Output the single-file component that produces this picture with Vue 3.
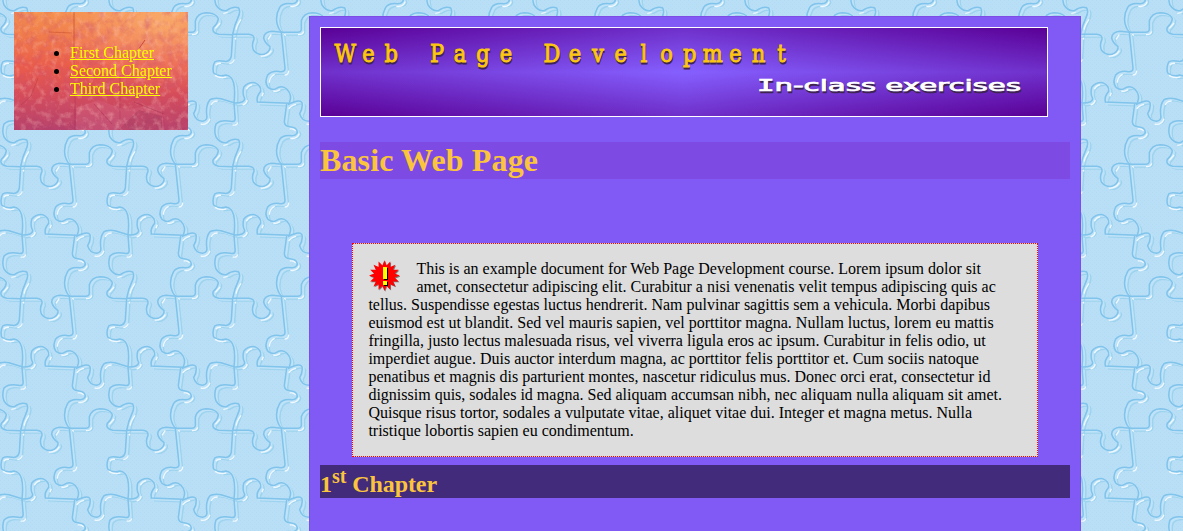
<script setup>
const chapters = ['First Chapter', 'Second Chapter', 'Third Chapter']
const title = 'Web Page Development'
const titleX = [...title].map((_, i) => ((24.4 + i * 22.95) / 0.84).toFixed(2)).join(' ')

const intro = [
  'This is an example document for Web Page Development course. Lorem ipsum dolor sit',
  'amet, consectetur adipiscing elit. Curabitur a nisi venenatis velit tempus adipiscing quis ac',
  'tellus. Suspendisse egestas luctus hendrerit. Nam pulvinar sagittis sem a vehicula. Morbi dapibus',
  'euismod est ut blandit. Sed vel mauris sapien, vel porttitor magna. Nullam luctus, lorem eu mattis',
  'fringilla, justo lectus malesuada risus, vel viverra ligula eros ac ipsum. Curabitur in felis odio, ut',
  'imperdiet augue. Duis auctor interdum magna, ac porttitor felis porttitor et. Cum sociis natoque',
  'penatibus et magnis dis parturient montes, nascetur ridiculus mus. Donec orci erat, consectetur id',
  'dignissim quis, sodales id magna. Sed aliquam accumsan nibh, nec aliquam nulla aliquam sit amet.',
  'Quisque risus tortor, sodales a vulputate vitae, aliquet vitae dui. Integer et magna metus. Nulla',
  'tristique lobortis sapien eu condimentum.'
].join(' ')

// Starburst outline of the warning icon
const spikes = 16
const burst = Array.from({ length: spikes * 2 }, (_, i) => {
  const r = i % 2 ? 10.4 : 15.4
  const a = (Math.PI * i) / spikes - Math.PI / 2
  return `${(16.4 + r * Math.cos(a)).toFixed(1)},${(15.6 + r * Math.sin(a)).toFixed(1)}`
}).join(' ')

// Jigsaw outlines, drawn on a 318 x 396 tile (three units per pixel)
const jigsaw = [
  'M62 97H110Q128 98 126 112Q118 128 124 144Q136 160 156 157Q176 148 174 134Q158 122 155 108Q156 90 180 88L210 91',
  'M210 91H258Q270 90 268 76V56Q275 33 300 32Q330 33 337 50Q335 65 322 76Q316 92 338 97L380 98',
  'M62 97L58 162Q54 180 38 178Q15 173 8 180Q0 195 5 213Q20 226 42 219Q60 222 65 243Q70 265 66 303',
  'M66 303L69 345Q72 362 55 358Q25 353 12 366Q5 385 12 405Q25 425 43 422Q64 407 80 414Q87 425 77 445Q67 465 62 493',
  'M208 91L219 198Q220 210 205 209Q180 205 167 219Q156 240 168 256Q182 266 192 260Q210 247 225 262Q242 280 232 303',
  'M224 306L217 358Q217 374 234 374Q255 376 256 390Q253 402 238 401Q213 398 203 412Q190 435 195 460Q200 480 210 487',
  'M66 303Q98 304 98 289Q90 275 95 256Q108 240 128 242Q148 250 146 268Q132 285 136 300L232 304',
  'M228 308Q262 290 270 302Q273 318 263 335Q268 356 290 358Q306 355 302 338Q299 308 312 293Q327 286 345 290L384 302'
]
const glints = [
  'M146 163Q168 163 178 146', 'M168 112L178 97', 'M258 98Q272 99 275 88',
  'M328 79L342 63', 'M52 185Q64 183 67 172', 'M11 189Q17 183 27 184',
  'M9 220Q26 231 42 225', 'M62 369Q76 371 77 361', 'M34 430L47 428',
  'M73 83Q72 73 87 52', 'M218 219Q229 219 230 206', 'M172 242Q173 224 188 217',
  'M184 267Q194 270 204 263', 'M235 409Q257 412 261 395', 'M233 381Q244 379 251 386',
  'M92 309Q106 304 105 294', 'M103 262Q108 251 120 248', 'M150 283L154 272',
  'M230 321Q236 311 252 307', 'M284 366Q305 370 312 350', 'M316 309Q320 297 335 297',
  'M69 108L72 112', 'M217 96L221 101'
]
const wraps = [
  [0, 0], [-318, 0], [318, 0], [0, -396], [-318, -396], [0, 396]
]

const scratches = [
  { d: 'M60 0V58', c: '#a8281c', w: 0.8, o: 0.55 },
  { d: 'M61 70V118', c: '#8e1745', w: 0.6, o: 0.4 },
  { d: 'M35 20L58 21', c: '#a92412', w: 0.6, o: 0.5 },
  { d: 'M124 38L131 28', c: '#b01e12', w: 1, o: 0.6 },
  { d: 'M106 66V108', c: '#99284d', w: 0.6, o: 0.5 },
  { d: 'M80 92L98 112', c: '#982045', w: 0.6, o: 0.6 },
  { d: 'M24 66L17 84L7 93', c: '#a22a3c', w: 0.6, o: 0.5 },
  { d: 'M120 90L150 102', c: '#9e2848', w: 0.7, o: 0.6 }
]
</script>

<template>
  <svg class="backdrop" aria-hidden="true">
    <defs>
      <g id="lines"><path v-for="d in jigsaw" :key="d" :d="d" /></g>
      <g id="glints"><path v-for="d in glints" :key="d" :d="d" /></g>
      <pattern id="dither" width="4" height="4" patternUnits="userSpaceOnUse">
        <rect width="4" height="4" fill="#b9dff7" />
        <rect width="1" height="1" fill="#b2daf3" />
        <rect x="2" y="2" width="1" height="1" fill="#b3dbf4" />
      </pattern>
      <pattern id="puzzle" width="106" height="132" y="2" patternUnits="userSpaceOnUse">
        <g transform="scale(.33333)" fill="none">
          <g v-for="([x, y], i) in wraps" :key="'s' + i" :transform="`translate(${x} ${y})`">
            <use href="#lines" x="10" y="8" stroke="#9dd3ee" stroke-width="4.5" />
            <use href="#lines" x="5" y="4" stroke="#bfe3f8" stroke-width="5" />
          </g>
          <g v-for="([x, y], i) in wraps" :key="'d' + i" :transform="`translate(${x} ${y})`">
            <use href="#lines" stroke="#80c3eb" stroke-width="4.5" />
            <use href="#glints" stroke="#f0f9ff" stroke-width="4" />
          </g>
        </g>
      </pattern>
    </defs>
    <rect width="100%" height="100%" fill="url(#dither)" />
    <rect width="100%" height="100%" fill="url(#puzzle)" />
  </svg>

  <div class="page">
    <nav class="menu">
      <svg class="texture" viewBox="0 0 174 118" aria-hidden="true">
        <defs>
          <linearGradient id="sunset" x1="0" y1="0" x2="0" y2="1">
            <stop offset="0" stop-color="#f4914e" />
            <stop offset=".22" stop-color="#f07a4b" />
            <stop offset=".45" stop-color="#ea5d4b" />
            <stop offset=".7" stop-color="#d54c5a" />
            <stop offset="1" stop-color="#b4416c" />
          </linearGradient>
          <radialGradient id="glow" cx=".85" cy=".1" r=".6">
            <stop offset="0" stop-color="#ffc884" stop-opacity=".5" />
            <stop offset="1" stop-color="#ffb090" stop-opacity="0" />
          </radialGradient>
          <filter id="grain" x="0" y="0" width="100%" height="100%">
            <feTurbulence type="fractalNoise" baseFrequency=".1 .09" numOctaves="5" seed="8" />
            <feColorMatrix values="0 0 0 0 .6  0 0 0 0 .08  0 0 0 0 .16  2.6 0 0 0 -1.1" />
          </filter>
          <filter id="flecks" x="0" y="0" width="100%" height="100%">
            <feTurbulence type="fractalNoise" baseFrequency=".16 .14" numOctaves="5" seed="21" />
            <feColorMatrix values="0 0 0 0 1  0 0 0 0 .62  0 0 0 0 .55  0 2.4 0 0 -1.15" />
          </filter>
        </defs>
        <rect width="174" height="118" fill="url(#sunset)" />
        <rect width="174" height="118" fill="url(#glow)" />
        <path d="M62 118V96L84 88L112 98L140 92L147 90L150 118Z" fill="#e37994" opacity=".25" />
        <path d="M104 118L125 98L148 104V118Z" fill="#8e244b" opacity=".3" />
        <rect width="174" height="118" filter="url(#grain)" opacity=".42" />
        <rect width="174" height="118" filter="url(#flecks)" opacity=".35" />
        <path
          v-for="s in scratches" :key="s.d" :d="s.d" fill="none"
          :stroke="s.c" :stroke-width="s.w" :opacity="s.o"
        />
      </svg>
      <ul>
        <li v-for="c in chapters" :key="c"><a href="#">{{ c }}</a></li>
      </ul>
    </nav>

    <main class="content">
      <div class="banner">
        <svg width="726" height="88" viewBox="0 0 726 88">
          <g class="title" transform="scale(.84 1)">
            <text class="title-shadow" :x="titleX" y="34.6" transform="translate(.8 1.2)" aria-hidden="true">{{ title }}</text>
            <text :x="titleX" y="34">{{ title }}</text>
          </g>
          <g class="subtitle">
            <text class="sub-shadow" x="437" y="64.5" textLength="264" lengthAdjust="spacingAndGlyphs" aria-hidden="true"><tspan class="slab">I</tspan>n-class exercises</text>
            <text x="436" y="63" textLength="264" lengthAdjust="spacingAndGlyphs"><tspan class="slab">I</tspan>n-class exercises</text>
          </g>
        </svg>
      </div>

      <h1>Basic Web Page</h1>

      <div class="note">
        <svg class="warning" width="32" height="32" viewBox="0 0 32 32" aria-hidden="true">
          <polygon :points="burst" fill="#777" transform="translate(.8 .8)" />
          <polygon :points="burst" fill="#f00" />
          <path d="M16 8H20V20H16ZM16 22H20V26H16Z" fill="#000" />
          <path d="M15 7H19V19H15ZM15 21H19V25H15Z" fill="#ff0" />
        </svg>
        {{ intro }}
      </div>

      <h2>1<sup>st</sup> Chapter</h2>
    </main>
  </div>
</template>

<style>
html,
body {
  height: 100%;
  overflow: hidden;
  background: #b8dff8;
}
</style>

<style scoped>
.backdrop {
  position: fixed;
  inset: 0;
  width: 100%;
  height: 100%;
}
.page {
  position: relative;
  display: flex;
  align-items: flex-start;
  height: 531px;
  overflow: hidden;
  font: 16px/18px 'Liberation Serif', 'Times New Roman', serif;
  color: #000;
}
.menu {
  position: relative;
  box-sizing: border-box;
  flex: none;
  width: 174px;
  height: 118px;
  margin: 12px 0 0 14px;
  padding: 16px;
}
.texture {
  position: absolute;
  inset: 0;
  width: 174px;
  height: 118px;
}
.menu ul {
  position: relative;
  margin: 16px 0;
  padding-left: 40px;
  white-space: nowrap;
}
.menu a {
  color: #ff0;
  text-decoration: underline;
}
.content {
  box-sizing: border-box;
  flex: none;
  width: 772px;
  height: 800px;
  margin: 16px 0 0 121px;
  padding: 10px;
  border: 1px solid #7d4de6;
  background: #8159f5;
}
.banner {
  box-sizing: border-box;
  width: 728px;
  height: 90px;
  border: 1px solid #fff;
  background:
    linear-gradient(rgba(90, 0, 150, .5), rgba(133, 96, 255, .5), rgba(90, 0, 150, .5)),
    linear-gradient(90deg, #5a0096, #8560ff, #5a0096);
}
.banner svg {
  display: block;
}
.title {
  font: 25px 'DejaVu Serif', serif;
  text-anchor: middle;
  fill: #fdc70f;
  stroke: #fdc70f;
  stroke-width: 1px;
}
.title-shadow {
  fill: #3d2450;
  stroke: #3d2450;
}
.subtitle {
  font: 16px 'DejaVu Sans', sans-serif;
  fill: #fff;
  stroke: #fff;
  stroke-width: .7px;
}
.slab {
  font-family: 'DejaVu Sans Mono', monospace;
}
.sub-shadow {
  fill: #3d2450;
  stroke: #3d2450;
}
h1,
h2 {
  color: #fbc43d;
  font-weight: bold;
}
h1 {
  height: 37px;
  margin: 25px 0 64px;
  font-size: 32px;
  line-height: 37px;
  letter-spacing: .13px;
  background: #7d4be3;
}
.note {
  box-sizing: border-box;
  width: 686px;
  height: 214px;
  margin: 0 32px;
  padding: 16px 33px 16px 15.4px;
  border: 1px dotted #f00;
  background: #ddd;
}
.warning {
  float: left;
  margin-right: 16px;
}
h2 {
  height: 33px;
  margin: 8px 0 0;
  font-size: 24px;
  line-height: normal;
  letter-spacing: -.07px;
  background: #412b7a;
}
</style>
